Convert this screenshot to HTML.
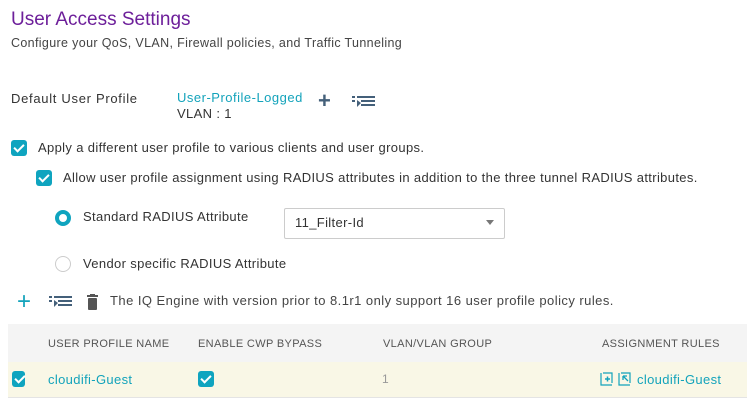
<html><head><style>
body{margin:0;width:747px;height:405px;background:#fff;font-family:"Liberation Sans",sans-serif;color:#333;position:relative;overflow:hidden}
.a{position:absolute;white-space:nowrap}
.f{font-size:13px;letter-spacing:.35px}
.cb{position:absolute;width:16px;height:16px;background:#0fa4bf;border-radius:3px}
.cb:after{content:"";position:absolute;left:5px;top:2px;width:4px;height:8px;border:solid #fff;border-width:0 2px 2px 0;transform:rotate(45deg)}
.t{color:#13a3bb}
.h{font-size:11px;color:#555;top:338px;letter-spacing:.35px}
</style></head><body>
<div class="a" style="left:11px;top:9px;font-size:19px;color:#6d1f9a">User Access Settings</div>
<div class="a" style="left:11px;top:36px;font-size:12.5px;letter-spacing:.35px;color:#444">Configure your QoS, VLAN, Firewall policies, and Traffic Tunneling</div>
<div class="a f" style="left:11px;top:91px;letter-spacing:.7px">Default User Profile</div>
<div class="a t f" style="left:177px;top:90px;letter-spacing:.5px">User-Profile-Logged</div>
<div class="a f" style="left:177px;top:106px">VLAN : 1</div>
<div class="a" style="left:318px;top:88px;font-size:22px;color:#44607a;font-weight:bold">+</div>
<svg class="a" style="left:352px;top:95px" width="24" height="14"><g fill="#44607a"><rect x="0" y="1" width="3" height="2"/><rect x="5" y="1" width="18" height="2"/><rect x="0" y="5" width="3" height="2"/><rect x="9" y="5" width="14" height="2"/><rect x="9" y="9" width="14" height="2"/><path d="M5 5l4 3-4 4z"/></g></svg>
<div class="cb" style="left:11px;top:140px"></div>
<div class="a f" style="left:38px;top:140px">Apply a different user profile to various clients and user groups.</div>
<div class="cb" style="left:36px;top:170px"></div>
<div class="a f" style="left:63px;top:170px">Allow user profile assignment using RADIUS attributes in addition to the three tunnel RADIUS attributes.</div>
<div class="a" style="left:55px;top:210px;width:8px;height:8px;border:4px solid #0fa4bf;border-radius:50%;background:#fff"></div>
<div class="a f" style="left:83px;top:209px">Standard RADIUS Attribute</div>
<div class="a" style="left:284px;top:208px;width:219px;height:29px;border:1px solid #ccc;border-radius:2px"></div>
<div class="a f" style="left:295px;top:215px">11_Filter-Id</div>
<div class="a" style="left:486px;top:220px;border:4px solid transparent;border-top:5px solid #777;width:0;height:0"></div>
<div class="a" style="left:55px;top:256px;width:14px;height:14px;border:1px solid #ccc;border-radius:50%"></div>
<div class="a f" style="left:83px;top:256px">Vendor specific RADIUS Attribute</div>
<div class="a t" style="left:17px;top:288px;font-size:24px">+</div>
<svg class="a" style="left:49px;top:295px" width="24" height="14"><g fill="#44607a"><rect x="0" y="1" width="3" height="2"/><rect x="5" y="1" width="18" height="2"/><rect x="0" y="5" width="3" height="2"/><rect x="9" y="5" width="14" height="2"/><rect x="9" y="9" width="14" height="2"/><path d="M5 5l4 3-4 4z"/></g></svg>
<svg class="a" style="left:87px;top:294px" width="11" height="16"><rect x="0" y="1" width="11" height="2" fill="#555"/><rect x="3" y="0" width="5" height="2" fill="#555"/><rect x="1" y="4" width="9" height="12" rx="1" fill="#555"/></svg>
<div class="a" style="left:110px;top:293px;font-size:13px;letter-spacing:.45px;color:#444">The IQ Engine with version prior to 8.1r1 only support 16 user profile policy rules.</div>
<div class="a" style="left:8px;top:324px;width:739px;height:38px;background:#f4f4f4"></div>
<div class="a" style="left:8px;top:362px;width:739px;height:35px;background:#f9f7e6;border-bottom:1px solid #e4e4e4"></div>
<div class="a h" style="left:48px">USER PROFILE NAME</div>
<div class="a h" style="left:198px">ENABLE CWP BYPASS</div>
<div class="a h" style="left:383px">VLAN/VLAN GROUP</div>
<div class="a h" style="left:602px">ASSIGNMENT RULES</div>
<div class="cb" style="left:12px;top:371px;width:13px;height:16px"></div>
<div class="a t f" style="left:48px;top:372px">cloudifi-Guest</div>
<div class="cb" style="left:198px;top:371px"></div>
<div class="a" style="left:382px;top:372px;font-size:12px;color:#999">1</div>
<svg class="a" style="left:600px;top:372px" width="32" height="14"><g fill="none" stroke="#13a3bb" stroke-width="1.2"><path d="M1 1v12h11"/><path d="M3 1h9v10"/><path d="M19 1v12h11"/><path d="M21 1h9v10"/></g><path d="M5 7h5M7.5 4.5v5" stroke="#13a3bb" stroke-width="1.5"/><path d="M23 4l5 5M23 4v4M23 4h4" stroke="#13a3bb" stroke-width="1.3" fill="none"/></svg>
<div class="a t f" style="left:637px;top:372px">cloudifi-Guest</div>
</body></html>
